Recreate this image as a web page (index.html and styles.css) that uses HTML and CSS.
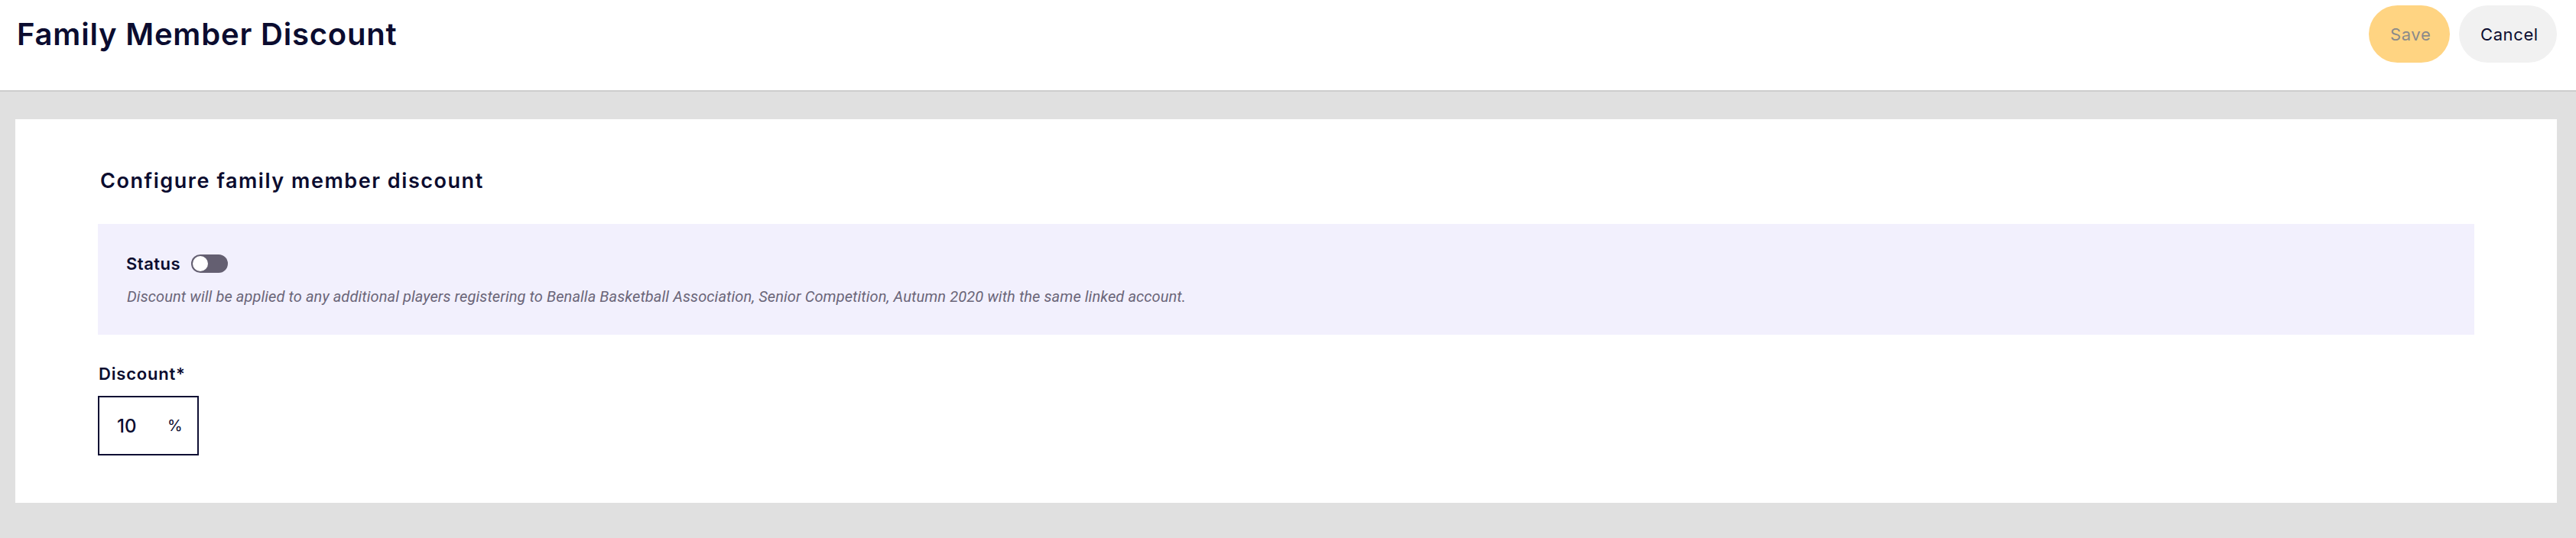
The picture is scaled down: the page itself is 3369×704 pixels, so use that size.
FILE: index.html
```html
<!DOCTYPE html>
<html lang="en">
<head>
<meta charset="utf-8">
<title>Family Member Discount</title>
<link rel="stylesheet" href="styles.css">
</head>
<body>
<header class="topbar">
  <h1 class="page-title">Family Member Discount</h1>
  <div class="actions">
    <button class="btn btn-save" type="button">Save</button>
    <button class="btn btn-cancel" type="button">Cancel</button>
  </div>
</header>
<main class="content">
  <section class="card">
    <h2 class="section-title">Configure family member discount</h2>
    <div class="status-box">
      <div class="status-row">
        <span class="status-label">Status</span>
        <span class="toggle"><span class="knob"></span></span>
      </div>
      <p class="status-note">Discount will be applied to any additional players registering to Benalla Basketball Association, Senior Competition, Autumn 2020 with the same linked account.</p>
    </div>
    <div class="field">
      <label class="field-label">Discount*</label>
      <div class="input-box">
        <span class="input-value">10</span>
        <span class="input-suffix">%</span>
      </div>
    </div>
  </section>
</main>
</body>
</html>
```

FILE: styles.css
```css
* { box-sizing: border-box; }
html, body { margin: 0; padding: 0; }
body {
  background: #e0e0e0;
  font-family: "Inter", "Roboto", "Noto Sans", sans-serif;
  color: #0b0c2f;
  width: 3369px;
  height: 704px;
  overflow: hidden;
}
.topbar {
  background: #ffffff;
  height: 120px;
  border-bottom: 2px solid #cdcdcd;
  display: flex;
  align-items: flex-start;
  justify-content: space-between;
  padding: 7px 25px 0 20px;
}
.page-title {
  margin: 0;
  font-size: 40px;
  font-weight: 600;
  letter-spacing: 0.8px;
  line-height: 75px;
  color: #0b0c2f;
  padding-left: 2px;
}
.actions {
  display: flex;
  gap: 12px;
}
.btn {
  height: 75px;
  border: none;
  border-radius: 38px;
  padding: 0 28px;
  font-family: "Inter", "Roboto", sans-serif;
  font-size: 22px;
  letter-spacing: 0.6px;
  cursor: pointer;
}
.btn-save {
  background: #ffd482;
  color: #8a8a8a;
  width: 106px;
}
.btn-cancel {
  background: #f1f1f1;
  color: #0b0c2f;
  width: 128px;
}
.content {
  padding: 36px 25px 0 20px;
}
.card {
  background: #ffffff;
  height: 502px;
  padding: 65px 108px 0 108px;
}
.section-title {
  margin: 0;
  font-size: 27px;
  font-weight: 600;
  letter-spacing: 1.55px;
  line-height: 32px;
  padding-left: 3px;
}
.status-box {
  margin-top: 40px;
  background: #f2f0fd;
  height: 145px;
  padding: 38px 37px 0 37px;
}
.status-row {
  display: flex;
  align-items: center;
  gap: 14px;
  height: 28px;
}
.status-label {
  font-size: 22px;
  font-weight: 600;
  letter-spacing: 0.5px;
}
.toggle {
  width: 48px;
  height: 24px;
  border-radius: 12px;
  background: #645f71;
  display: flex;
  align-items: center;
  padding: 2px;
}
.knob {
  width: 20px;
  height: 20px;
  border-radius: 50%;
  background: #ffffff;
}
.status-note {
  margin: 17px 0 0 1px;
  font-family: "Roboto", sans-serif;
  font-style: italic;
  font-size: 20px;
  letter-spacing: 0.1px;
  line-height: 24px;
  color: #6b6679;
}
.field {
  margin-top: 37px;
}
.field-label {
  display: block;
  font-size: 22px;
  font-weight: 600;
  letter-spacing: 0.8px;
  line-height: 28px;
  padding-left: 1px;
}
.input-box {
  margin-top: 15px;
  width: 132px;
  height: 78px;
  border: 2px solid #0e0e33;
  display: flex;
  align-items: center;
  padding-left: 23px;
}
.input-value {
  font-size: 24px;
  font-weight: 500;
  width: 66px;
}
.input-suffix {
  font-size: 20px;
}
```
